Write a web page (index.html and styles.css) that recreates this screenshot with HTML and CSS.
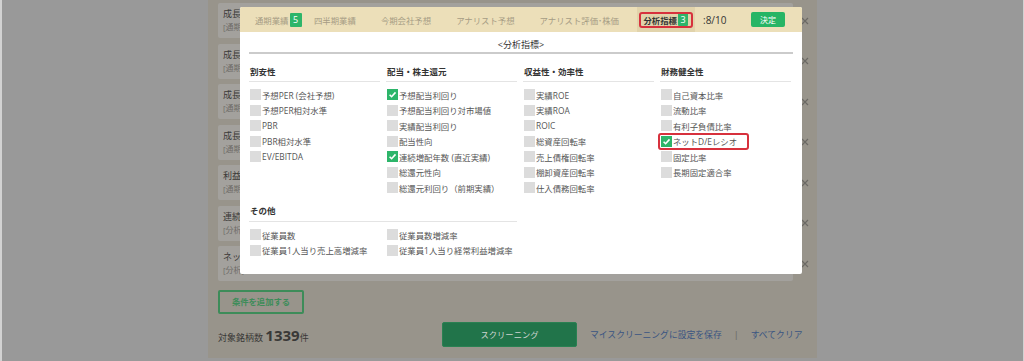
FILE: index.html
```html
<!DOCTYPE html>
<html>
<head>
<meta charset="utf-8">
<title>スクリーニング 分析指標</title>
<link rel="stylesheet" href="styles.css">
</head>
<body>
<div class="screen">
    <div class="page">
        <ul class="cond_list">
            <li class="cond_row"><div class="cond_card"><p class="cond_name">成長性</p><p class="cond_sub">[通期]</p></div><span class="cond_del"><svg width="8" height="8" viewBox="0 0 8 8"><path d="M1 1L7 7M7 1L1 7" stroke="#6b6964" stroke-width="1.2"/></svg></span></li>
            <li class="cond_row"><div class="cond_card"><p class="cond_name">成長性</p><p class="cond_sub">[通期]</p></div><span class="cond_del"><svg width="8" height="8" viewBox="0 0 8 8"><path d="M1 1L7 7M7 1L1 7" stroke="#6b6964" stroke-width="1.2"/></svg></span></li>
            <li class="cond_row"><div class="cond_card"><p class="cond_name">成長性</p><p class="cond_sub">[通期]</p></div><span class="cond_del"><svg width="8" height="8" viewBox="0 0 8 8"><path d="M1 1L7 7M7 1L1 7" stroke="#6b6964" stroke-width="1.2"/></svg></span></li>
            <li class="cond_row"><div class="cond_card"><p class="cond_name">成長性</p><p class="cond_sub">[通期]</p></div><span class="cond_del"><svg width="8" height="8" viewBox="0 0 8 8"><path d="M1 1L7 7M7 1L1 7" stroke="#6b6964" stroke-width="1.2"/></svg></span></li>
            <li class="cond_row"><div class="cond_card"><p class="cond_name">利益率</p><p class="cond_sub">[通期]</p></div><span class="cond_del"><svg width="8" height="8" viewBox="0 0 8 8"><path d="M1 1L7 7M7 1L1 7" stroke="#6b6964" stroke-width="1.2"/></svg></span></li>
            <li class="cond_row"><div class="cond_card"><p class="cond_name">連続</p><p class="cond_sub">[分析]</p></div><span class="cond_del"><svg width="8" height="8" viewBox="0 0 8 8"><path d="M1 1L7 7M7 1L1 7" stroke="#6b6964" stroke-width="1.2"/></svg></span></li>
            <li class="cond_row"><div class="cond_card"><p class="cond_name">ネット</p><p class="cond_sub">[分析]</p></div><span class="cond_del"><svg width="8" height="8" viewBox="0 0 8 8"><path d="M1 1L7 7M7 1L1 7" stroke="#6b6964" stroke-width="1.2"/></svg></span></li>
        </ul>
        <div class="add_btn">条件を追加する</div>
        <div class="result_row">
            <p class="count">対象銘柄数 <b class="count_num">1339</b>件</p>
            <div class="screening_btn">スクリーニング</div>
            <a class="text_link save_link">マイスクリーニングに設定を保存</a>
            <span class="sep">|</span>
            <a class="text_link">すべてクリア</a>
        </div>
    </div>

    <!-- 指標選択モーダル -->
    <div class="modal">
        <div class="modal_head">
            <span class="tab tab_first">通期業績<span class="badge">5</span></span>
            <span class="tab">四半期業績</span>
            <span class="tab">今期会社予想</span>
            <span class="tab">アナリスト予想</span>
            <span class="tab">アナリスト評価･株価</span>
            <span class="tab tab_on">分析指標<span class="badge">3</span><span class="mark"></span></span>
            <span class="score">:8/10</span>
            <span class="decide_btn">決定</span>
        </div>
        <div class="modal_body">
            <p class="modal_title">&lt;分析指標&gt;</p>
            <div class="grp_grid">
                <div class="grp">
                    <p class="grp_head">割安性</p>
                    <ul class="opt_list">
                        <li class="opt_item"><span class="chk"></span>予想PER (会社予想)</li>
                        <li class="opt_item"><span class="chk"></span>予想PER相対水準</li>
                        <li class="opt_item"><span class="chk"></span>PBR</li>
                        <li class="opt_item"><span class="chk"></span>PBR相対水準</li>
                        <li class="opt_item"><span class="chk"></span>EV/EBITDA</li>
                    </ul>
                </div>
                <div class="grp">
                    <p class="grp_head">配当・株主還元</p>
                    <ul class="opt_list">
                        <li class="opt_item"><span class="chk chk_on"><svg width="11" height="11" viewBox="0 0 11 11"><path d="M2.6 5.7L4.6 7.7L8.5 3.4" fill="none" stroke="#fff" stroke-width="1.6"/></svg></span>予想配当利回り</li>
                        <li class="opt_item"><span class="chk"></span>予想配当利回り対市場値</li>
                        <li class="opt_item"><span class="chk"></span>実績配当利回り</li>
                        <li class="opt_item"><span class="chk"></span>配当性向</li>
                        <li class="opt_item"><span class="chk chk_on"><svg width="11" height="11" viewBox="0 0 11 11"><path d="M2.6 5.7L4.6 7.7L8.5 3.4" fill="none" stroke="#fff" stroke-width="1.6"/></svg></span>連続増配年数 (直近実績)</li>
                        <li class="opt_item"><span class="chk"></span>総還元性向</li>
                        <li class="opt_item"><span class="chk"></span>総還元利回り（前期実績）</li>
                    </ul>
                </div>
                <div class="grp">
                    <p class="grp_head">収益性・効率性</p>
                    <ul class="opt_list">
                        <li class="opt_item"><span class="chk"></span>実績ROE</li>
                        <li class="opt_item"><span class="chk"></span>実績ROA</li>
                        <li class="opt_item"><span class="chk"></span>ROIC</li>
                        <li class="opt_item"><span class="chk"></span>総資産回転率</li>
                        <li class="opt_item"><span class="chk"></span>売上債権回転率</li>
                        <li class="opt_item"><span class="chk"></span>棚卸資産回転率</li>
                        <li class="opt_item"><span class="chk"></span>仕入債務回転率</li>
                    </ul>
                </div>
                <div class="grp">
                    <p class="grp_head">財務健全性</p>
                    <ul class="opt_list">
                        <li class="opt_item"><span class="chk"></span>自己資本比率</li>
                        <li class="opt_item"><span class="chk"></span>流動比率</li>
                        <li class="opt_item"><span class="chk"></span>有利子負債比率</li>
                        <li class="opt_item"><span class="chk chk_on"><svg width="11" height="11" viewBox="0 0 11 11"><path d="M2.6 5.7L4.6 7.7L8.5 3.4" fill="none" stroke="#fff" stroke-width="1.6"/></svg></span>ネットD/Eレシオ<span class="mark mark_opt"></span></li>
                        <li class="opt_item"><span class="chk"></span>固定比率</li>
                        <li class="opt_item"><span class="chk"></span>長期固定適合率</li>
                    </ul>
                </div>
                <div class="grp grp_other">
                    <p class="grp_head">その他</p>
                    <ul class="opt_list opt_two">
                        <li class="opt_item"><span class="chk"></span>従業員数</li>
                        <li class="opt_item"><span class="chk"></span>従業員数増減率</li>
                        <li class="opt_item"><span class="chk"></span>従業員1人当り売上高増減率</li>
                        <li class="opt_item"><span class="chk"></span>従業員1人当り経常利益増減率</li>
                    </ul>
                </div>
            </div>
        </div>
    </div>
</div>
</body>
</html>
```

FILE: styles.css
```css
*{
    box-sizing: border-box;
}
body{
    margin: 0;
    background-color: #999;
    font-family: "Open Sans", "Noto Sans CJK JP", sans-serif;
    color: #333;
}
ul, p{
    margin: 0;
    padding: 0;
    list-style: none;
}
.screen{
    position: relative;
    height: 361px;
    overflow: hidden;
    box-shadow: inset 2px 0 #d2d2d2, inset -1px 0 #d2d2d2;
}

/* 背景の画面 */
.page{
    width: 609px;
    height: 358px;
    margin-left: 208px;
    padding: 3px 0 0 10px;
    background-color: #98948b;
}
.cond_list{
    display: flex;
    flex-direction: column;
    gap: 5.5px;
}
.cond_row{
    display: flex;
    align-items: center;
    height: 35px;
}
.cond_card{
    width: 575px;
    height: 35px;
    padding: 4px 5px 0;
    background-color: #a3a19d;
    border-radius: 2px;
}
.cond_name{
    font-size: 9px;
    line-height: 13px;
    color: #3b3a38;
}
.cond_sub{
    font-size: 8px;
    line-height: 13px;
    color: #6e6c68;
}
.cond_del{
    display: flex;
    justify-content: center;
    width: 24px;
}
.add_btn{
    width: 86px;
    height: 24px;
    margin-top: 9px;
    border: 2px solid #3d8c59;
    border-radius: 2px;
    color: #3d8c59;
    font-size: 8.3px;
    font-weight: bold;
    line-height: 20px;
    text-align: center;
}
.result_row{
    display: flex;
    align-items: center;
    height: 25px;
    margin-top: 8px;
}
.count{
    width: 224px;
    font-size: 9px;
    color: #3a3937;
}
.count_num{
    font-size: 15px;
    font-weight: bold;
}
.screening_btn{
    width: 135px;
    height: 25px;
    background-color: #21744a;
    border: 1px solid #2a8052;
    border-radius: 2px;
    color: #cdd3cf;
    font-size: 8.3px;
    line-height: 23px;
    text-align: center;
}
.text_link{
    color: #3a5482;
    font-size: 8.8px;
}
.save_link{
    margin-left: 13px;
}
.sep{
    margin: 0 12px;
    color: #66645f;
    font-size: 9px;
}

/* モーダル */
.modal{
    position: absolute;
    left: 240px;
    top: 7px;
    width: 562px;
    height: 267px;
    background-color: #fff;
    border-radius: 2px;
}
.modal_head{
    display: flex;
    align-items: center;
    height: 25px;
    padding: 0 17px 0 2.5px;
    background-color: #ecdfb9;
    border-radius: 2px 2px 0 0;
}
.tab{
    display: flex;
    align-items: center;
    height: 25px;
    padding: 0 12.5px;
    font-size: 8.4px;
    color: #a69c84;
    white-space: nowrap;
}
.tab_first{
    padding-right: 0;
}
.badge{
    display: inline-block;
    min-width: 12px;
    height: 14px;
    margin-left: 1px;
    background-color: #2db56a;
    border-radius: 1px;
    color: #fff;
    font-size: 9px;
    font-weight: normal;
    line-height: 14px;
    text-align: center;
}
.tab_on{
    position: relative;
    margin-left: 5px;
    padding: 0 7px;
    background-color: #e1d3ab;
    color: #333;
    font-weight: bold;
}
.tab_on .badge{
    min-width: 10px;
    height: 13px;
    line-height: 13px;
}
.mark{
    position: absolute;
    border: 2px solid #d7313d;
    border-radius: 3px;
}
.tab_on .mark{
    left: 2px;
    right: 2px;
    top: 5px;
    bottom: 4px;
}
.score{
    margin-left: 8px;
    font-size: 10px;
    color: #333;
}
.decide_btn{
    width: 34px;
    height: 15px;
    margin-left: auto;
    background-color: #27b565;
    border-radius: 2px;
    color: #fff;
    font-size: 8px;
    line-height: 15px;
    text-align: center;
}
.modal_body{
    padding: 0 9px;
}
.modal_title{
    padding: 6px 0 1px;
    border-bottom: 2px solid #cbcbcb;
    font-size: 9px;
    line-height: 13px;
    text-align: center;
}
.grp_grid{
    display: grid;
    grid-template-columns: repeat(4, 131px);
    column-gap: 6px;
}
.grp_head{
    margin-top: 12px;
    padding: 0 1px 3px;
    border-bottom: 1px solid #e4e4e4;
    font-size: 8.5px;
    font-weight: bold;
    line-height: 12px;
}
.grp_other{
    grid-column: 1 / 3;
}
.grp_other .grp_head{
    margin-top: 9.5px;
    padding-bottom: 4px;
}
.opt_list{
    margin-top: 5px;
}
.opt_two{
    display: grid;
    grid-template-columns: repeat(2, 131px);
    column-gap: 6px;
}
.opt_item{
    position: relative;
    display: flex;
    align-items: center;
    height: 15.5px;
    padding-left: 1px;
    font-size: 8.4px;
    color: #555;
    white-space: nowrap;
}
.chk{
    flex: none;
    width: 11px;
    height: 11px;
    margin-right: 1px;
    background-color: #dcdcdc;
}
.chk svg{
    display: block;
}
.chk_on{
    background-color: #2db56a;
}
.mark_opt{
    left: -2px;
    top: -1px;
    bottom: -0.5px;
    width: 91px;
}
```
